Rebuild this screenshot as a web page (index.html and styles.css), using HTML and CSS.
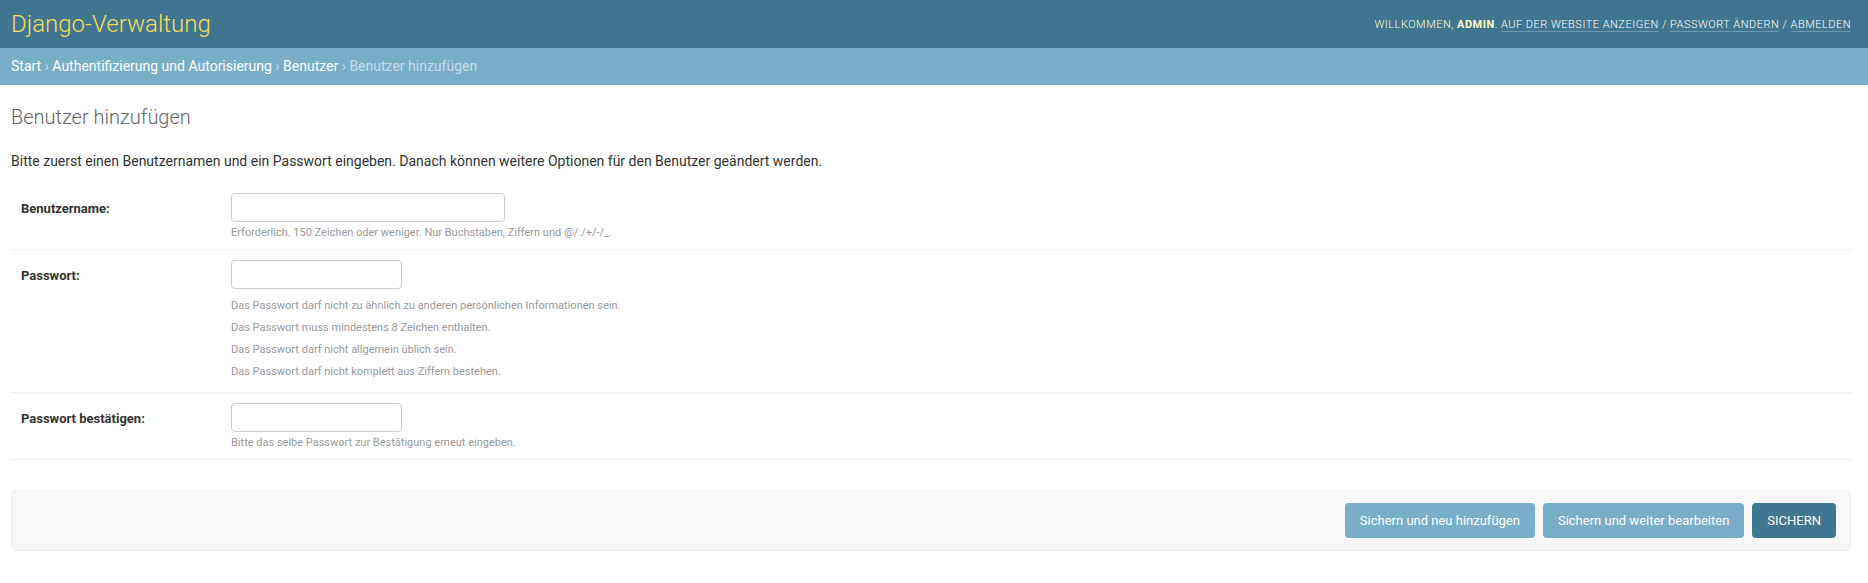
FILE: index.html
```html
<!DOCTYPE html>
<html lang="de">
<head>
<meta charset="utf-8">
<title>Benutzer hinzufügen | Django-Verwaltung</title>
<link rel="stylesheet" href="styles.css">
</head>
<body>
<header class="header">
  <h1 class="branding"><a href="#">Django-Verwaltung</a></h1>
  <div class="user-tools">Willkommen, <strong>admin</strong>. <a href="#">Auf der Website anzeigen</a> / <a href="#">Passwort ändern</a> / <a href="#">Abmelden</a></div>
</header>
<nav class="breadcrumbs"><a href="#">Start</a> › <a href="#">Authentifizierung und Autorisierung</a> › <a href="#">Benutzer</a> › Benutzer hinzufügen</nav>
<main class="content">
  <h2 class="title">Benutzer hinzufügen</h2>
  <form>
    <p class="intro">Bitte zuerst einen Benutzernamen und ein Passwort eingeben. Danach können weitere Optionen für den Benutzer geändert werden.</p>
    <div class="row">
      <label for="username">Benutzername:</label>
      <div class="field">
        <input class="text wide" id="username" type="text">
        <p class="help">Erforderlich. 150 Zeichen oder weniger. Nur Buchstaben, Ziffern und @/./+/-/_.</p>
      </div>
    </div>
    <div class="row">
      <label for="password1">Passwort:</label>
      <div class="field">
        <input class="text" id="password1" type="password">
        <ul class="help-list">
          <li>Das Passwort darf nicht zu ähnlich zu anderen persönlichen Informationen sein.</li>
          <li>Das Passwort muss mindestens 8 Zeichen enthalten.</li>
          <li>Das Passwort darf nicht allgemein üblich sein.</li>
          <li>Das Passwort darf nicht komplett aus Ziffern bestehen.</li>
        </ul>
      </div>
    </div>
    <div class="row">
      <label for="password2">Passwort bestätigen:</label>
      <div class="field">
        <input class="text" id="password2" type="password">
        <p class="help">Bitte das selbe Passwort zur Bestätigung erneut eingeben.</p>
      </div>
    </div>
    <div class="submit-row">
      <button type="button" class="button">Sichern und neu hinzufügen</button>
      <button type="button" class="button">Sichern und weiter bearbeiten</button>
      <button type="button" class="button primary">Sichern</button>
    </div>
  </form>
</main>
</body>
</html>
```
FILE: styles.css
```css
* { box-sizing: border-box; }
body {
  margin: 0;
  background: #fff;
  color: #333;
  font-family: Roboto, "Liberation Sans", sans-serif;
  font-size: 14px;
}
a { text-decoration: none; }
.header {
  display: flex;
  justify-content: space-between;
  align-items: center;
  padding: 10px 17px 10px 11px;
  background: #417690;
  color: #ffc;
}
.branding { margin: 0; font-size: 24px; font-weight: 300; line-height: 28px; }
.branding a { color: #f5dd5d; }
.user-tools {
  font-size: 11px;
  font-weight: 300;
  line-height: 13px;
  letter-spacing: 0.5px;
  text-transform: uppercase;
}
.user-tools strong { font-weight: 700; }
.user-tools a { color: #fff; border-bottom: 1px solid rgba(255, 255, 255, 0.25); }
.breadcrumbs {
  padding: 10px 11px;
  background: #79aec8;
  color: #c4dce8;
  line-height: 17px;
}
.breadcrumbs a { color: #fff; }
.content { padding: 20px 17px 32px 11px; }
.title { margin: 0 0 22px; color: #666; font-size: 20px; font-weight: 300; line-height: 24px; }
.intro { margin: 0 0 12px; line-height: 20px; }
.row {
  display: flex;
  padding: 10px;
  border-bottom: 1px solid #eee;
}
.row label { width: 210px; padding-top: 8px; font-size: 13px; font-weight: 700; line-height: 15px; }
.text {
  display: block;
  width: 171px;
  height: 29px;
  padding: 5px 6px;
  border: 1px solid #ccc;
  border-radius: 4px;
  background: #fff;
  font: inherit;
}
.wide { width: 274px; }
.help, .help-list { margin: 0; color: #999; font-size: 11px; line-height: 13px; }
.help { padding-top: 4px; }
.help-list {
  display: flex;
  flex-direction: column;
  gap: 9px;
  padding: 10px 0 4px;
  list-style: none;
}
.submit-row {
  display: flex;
  justify-content: flex-end;
  gap: 8px;
  margin-top: 30px;
  padding: 12px 14px;
  border: 1px solid #eee;
  border-radius: 4px;
  background: #f8f8f8;
}
.button {
  height: 35px;
  padding: 0 15px;
  border: 0;
  border-radius: 4px;
  background: #79aec8;
  color: #fff;
  font-family: inherit;
  font-size: 13px;
}
.primary { background: #417690; text-transform: uppercase; }
```
